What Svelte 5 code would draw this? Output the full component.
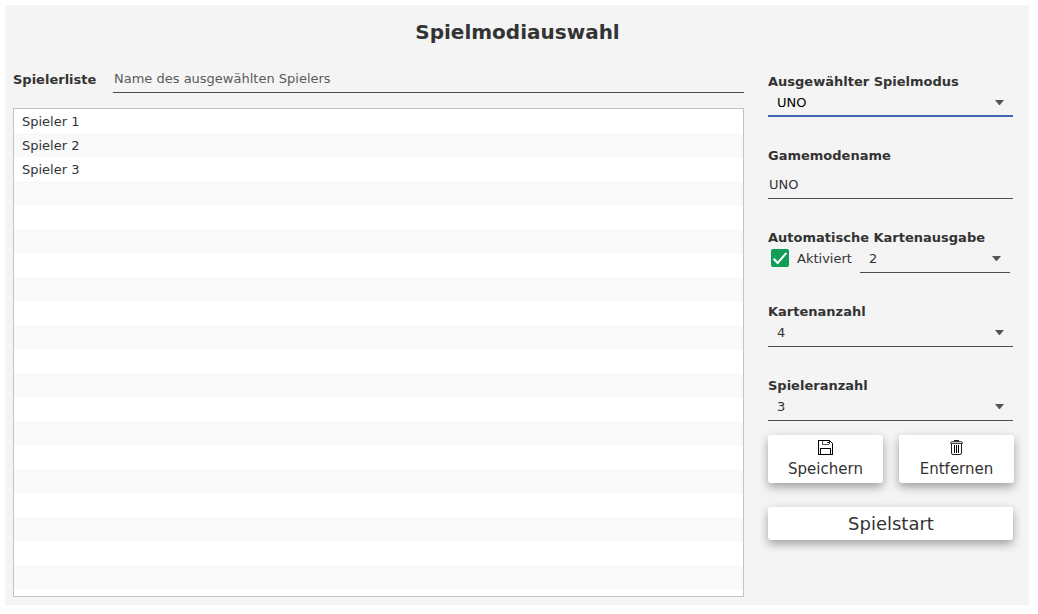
<script>
  const players = ['Spieler 1', 'Spieler 2', 'Spieler 3'];
  const emptyRows = Array.from({ length: 18 });
  let automatic = $state(true);
</script>

{#snippet dropdown(value, focused = false)}
  <div class="select" class:focused role="combobox" aria-expanded="false" aria-controls="options" tabindex="0">
    <span>{value}</span>
    <svg class="arrow" width="9" height="5" viewBox="0 0 9 5" aria-hidden="true">
      <path d="M0 0H9L4.9 5H4.1Z" fill="#555" />
    </svg>
  </div>
{/snippet}

<main class="panel">
  <h1>Spielmodiauswahl</h1>
  <div class="columns">
    <section class="players">
      <div class="player-head">
        <b>Spielerliste</b>
        <div class="name-input">Name des ausgewählten Spielers</div>
      </div>
      <ul>
        {#each players as player}
          <li>{player}</li>
        {/each}
        {#each emptyRows as _}
          <li></li>
        {/each}
      </ul>
    </section>

    <section class="settings">
      <div class="field">
        <b>Ausgewählter Spielmodus</b>
        {@render dropdown('UNO', true)}
      </div>
      <div class="field">
        <b>Gamemodename</b>
        <div class="text-input">UNO</div>
      </div>
      <div class="field">
        <b>Automatische Kartenausgabe</b>
        <div class="auto-row">
          <button
            class="check"
            class:on={automatic}
            role="checkbox"
            aria-checked={automatic}
            aria-label="Aktiviert"
            onclick={() => (automatic = !automatic)}
          >
            {#if automatic}
              <svg width="18" height="18" viewBox="0 0 18 18" aria-hidden="true">
                <path d="M2.6 9.7L6.7 14L15.4 3.8" fill="none" stroke="#fff" stroke-width="2" />
              </svg>
            {/if}
          </button>
          <span class="check-label">Aktiviert</span>
          {@render dropdown('2')}
        </div>
      </div>
      <div class="field">
        <b>Kartenanzahl</b>
        {@render dropdown('4')}
      </div>
      <div class="field">
        <b>Spieleranzahl</b>
        {@render dropdown('3')}
      </div>

      <div class="actions">
        <button class="raised">
          <svg width="15" height="15" viewBox="0 0 15 15" shape-rendering="crispEdges" aria-hidden="true">
            <path d="M.5 .5H11.5L14.5 3.5V14.5H.5Z" fill="none" stroke="#000" />
            <path d="M2.5 14V8.5H12.5V14" fill="none" stroke="#000" />
            <path d="M4.5 1V4.5H11" fill="none" stroke="#555" />
            <path d="M9 2H11V3H9ZM11 1H12V4H11Z" fill="#222" />
          </svg>
          <span>Speichern</span>
        </button>
        <button class="raised">
          <svg width="13" height="15" viewBox="0 0 13 15" aria-hidden="true">
            <path d="M4 .5H9M4.5 .5V1.5M8.5 .5V1.5" fill="none" stroke="#222" />
            <path d="M.5 3.5V2.9Q.9 1.5 2.3 1.5H10.7Q12.1 1.5 12.5 2.9V3.5Z" fill="#ccc" stroke="#444" />
            <path d="M1.5 4V13Q1.5 14.5 3 14.5H10Q11.5 14.5 11.5 13V4" fill="none" stroke="#222" />
            <path d="M4.5 5V13M6.5 5V13M8.5 5V13" stroke="#000" />
          </svg>
          <span>Entfernen</span>
        </button>
      </div>
      <button class="raised start">Spielstart</button>
    </section>
  </div>
</main>

<style>
  :global(body) {
    background: #fff;
  }
  .panel {
    box-sizing: border-box;
    width: 1024px;
    height: 600px;
    margin: 5px;
    padding: 15px 8px 8px;
    background: #f4f4f4;
    color: #333;
    font: 13px/16px 'DejaVu Sans', sans-serif;
  }
  h1 {
    margin: 0;
    padding-left: 1px;
    font-size: 20px;
    line-height: 24px;
    text-align: center;
  }
  .columns {
    display: grid;
    grid-template-columns: 731px 246px;
    column-gap: 24px;
    padding-top: 22px;
  }
  .player-head {
    display: flex;
    justify-content: space-between;
    height: 27px;
  }
  .player-head b {
    padding-top: 6px;
  }
  .name-input {
    box-sizing: border-box;
    width: 631px;
    padding: 5px 1px 0;
    border-bottom: 1px solid #4d4d4d;
    color: #5b5b5b;
  }
  ul {
    box-sizing: border-box;
    height: 489px;
    margin: 15px 0 0;
    padding: 0;
    overflow: hidden;
    border: 1px solid #c3c3c3;
    background: #fff;
    list-style: none;
  }
  li {
    box-sizing: border-box;
    height: 24px;
    padding: 5px 8px 3px;
  }
  li:nth-child(even) {
    background: #f9f9f9;
  }
  .settings {
    padding-top: 8px;
  }
  .field {
    width: 245px;
    margin-bottom: 31px;
  }
  .field b {
    display: block;
  }
  .select {
    box-sizing: border-box;
    display: flex;
    justify-content: space-between;
    height: 27px;
    padding: 5px 9px 0;
    border-bottom: 1px solid #4d4d4d;
    outline: none;
  }
  .select.focused {
    border-bottom: 2px solid #4361b5;
    color: #000;
  }
  .arrow {
    margin-top: 5px;
  }
  .text-input {
    box-sizing: border-box;
    height: 35px;
    padding: 13px 1px 0;
    border-bottom: 1px solid #4d4d4d;
  }
  .auto-row {
    display: flex;
    padding: 0 3px;
  }
  .auto-row .select {
    flex: 1;
  }
  button {
    padding: 0;
    border: 0;
    color: inherit;
    font: inherit;
  }
  .check {
    width: 18px;
    height: 18px;
    margin-top: 3px;
    border-radius: 2px;
    background: #fff;
  }
  .check.on {
    background: #0f9d58;
  }
  .check svg {
    display: block;
  }
  .check-label {
    box-sizing: border-box;
    width: 71px;
    padding: 5px 0 0 8px;
  }
  .actions {
    display: grid;
    grid-template-columns: 115px 115px;
    gap: 16px;
    margin: -17px 0 24px;
  }
  .raised {
    border-radius: 3px;
    background: #fff;
    box-shadow: 0 4px 10px rgba(0, 0, 0, 0.35);
  }
  .actions .raised {
    display: flex;
    flex-direction: column;
    align-items: center;
    height: 48px;
    padding-top: 5px;
    font-size: 15px;
    line-height: 18px;
  }
  .actions span {
    margin-top: 5px;
  }
  .start {
    display: block;
    width: 245px;
    height: 33px;
    padding-left: 1px;
    font-size: 18px;
  }
</style>
